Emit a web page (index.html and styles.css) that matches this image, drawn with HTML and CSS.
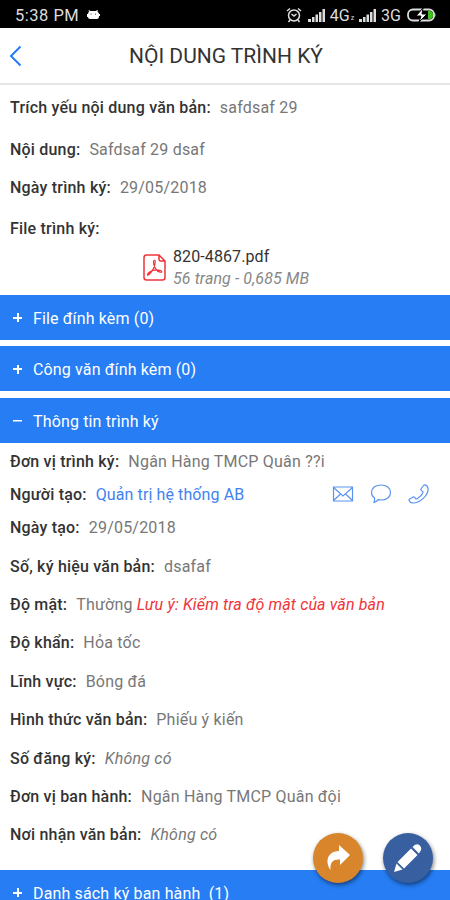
FILE: index.html
```html
<!DOCTYPE html>
<html lang="vi">
<head>
    <meta charset="UTF-8">
    <meta name="viewport" content="width=device-width, initial-scale=1.0">
    <title>Nội dung trình ký</title>
    <link rel="stylesheet" href="styles.css">
</head>
<body>
    <div class="screen">
        <div class="status-bar">
            <span class="clock">5:38 PM</span>
            <svg class="robot" width="15" height="12" viewBox="0 0 15 12"><path d="M3 3 2.500 1 4.500 2h5L12 1l-.5 2q1.500.5 1.500 2h1v2h-1q0 3-2 3H4q-2 0-2-2H1V5h1q0-1.500 1-2z" fill="#fff"/><circle cx="5" cy="5" r=".5"/><circle cx="9.500" cy="5" r=".5"/></svg>
            <div class="status-right">
                <svg width="16" height="16" viewBox="0 0 16 16" fill="none" stroke="#ddd" stroke-width="1.500"><circle cx="8" cy="8.500" r="5.500"/><path d="M5.500 7 8 9l2.500-2M1 4l3-2.500M15 4l-3-2.500M4 13l-1.500 2M12 13l1.500 2"/></svg>
                <svg class="signal" width="18" height="13" viewBox="0 0 18 13" fill="#ddd"><path d="M0 10h3v3H0zM4 8h2.500v5H4zM7.500 5.500H10V13H7.500zM11 3h2.500v10H11zM14.500 0H17v13h-2.500z"/></svg>
                <span class="net">4G</span><span class="net-small">z</span>
                <svg class="signal" width="18" height="13" viewBox="0 0 18 13" fill="#ddd"><path d="M0 10h3v3H0zM4 8h2.500v5H4zM7.500 5.500H10V13H7.500zM11 3h2.500v10H11zM14.500 0H17v13h-2.500z"/></svg>
                <span class="net">3G</span>
                <svg class="battery" width="30" height="14" viewBox="0 0 30 14"><rect x="1" y="1.500" width="26" height="11" rx="5" fill="none" stroke="#ddd" stroke-width="1.800"/><path d="M21 3h2q3 0 3 4t-3 4h-2z" fill="#3fc221"/><path d="M27.500 4.500q2 2.500 0 5z" fill="#ddd"/><path d="m16 0-7 8h5l-2 6 8-8h-5z" fill="#fff" stroke="#000" stroke-width="1"/></svg>
            </div>
        </div>

        <div class="header">
            <svg class="back" width="14" height="22" viewBox="0 0 14 22"><path d="M11.500 1.500 2 11l9.500 9.500" fill="none" stroke="#267df4" stroke-width="2"/></svg>
            <h1>NỘI DUNG TRÌNH KÝ</h1>
        </div>

        <div class="summary">
            <div class="row row-first"><b>Trích yếu nội dung văn bản:</b><span>safdsaf 29</span></div>
            <div class="row"><b>Nội dung:</b><span>Safdsaf 29 dsaf</span></div>
            <div class="row"><b>Ngày trình ký:</b><span>29/05/2018</span></div>
            <div class="row row-file"><b>File trình ký:</b></div>
            <div class="file">
                <svg width="24" height="27" viewBox="0 0 24 27" fill="none" stroke="#f0343a" stroke-width="1.500"><path d="M3.500 1H16l6 6v16.500Q22 26 19.500 26h-16Q1 26 1 23.500v-20Q1 1 3.500 1zM16 1v4q0 2 2 2h4"/><path d="M4.500 20.500c1.500-3.500 8-5.500 13-4 2 .8 1.500 2-.3 1.700-4-.7-6.700-6.200-6.700-10.200 0-2.200 2-2.200 1.800 0C12 12.500 9 18 6 20.500c-1 .8-2 .8-1.500 0z" stroke-width="1.200"/></svg>
                <div>
                    <div class="file-name">820-4867.pdf</div>
                    <div class="file-info">56 trang - 0,685 MB</div>
                </div>
            </div>
        </div>

        <div class="bar"><i class="sign plus"></i><span>File đính kèm (0)</span></div>
        <div class="bar"><i class="sign plus"></i><span>Công văn đính kèm (0)</span></div>
        <div class="bar bar-open"><i class="sign"></i><span>Thông tin trình ký</span></div>

        <div class="details">
            <div class="row row-unit"><b>Đơn vị trình ký:</b><span>Ngân Hàng TMCP Quân ??i</span></div>
            <div class="row row-creator">
                <b>Người tạo:</b><span class="link">Quản trị hệ thống AB</span>
                <div class="contact">
                    <svg width="22" height="18" viewBox="0 0 22 18"><path d="M1.500 2h19v14h-19zM1.500 2.500 11 11l9.500-8.500M1.500 15.500l7-6.500M20.500 15.500l-7-6.500"/></svg>
                    <svg width="22" height="20" viewBox="0 0 22 20"><path d="M11 1c5.500 0 9.500 3 9.500 7.500S16.500 16 11 16q-1.500 0-3-.4-1.500 2.400-4 2.900 1-2 .5-4.500-3-2-3-5.500C1.500 4 5.500 1 11 1z"/></svg>
                    <svg width="22" height="20" viewBox="0 0 22 20"><path d="M16 1q3-.5 4 3c1 7-8 15-15 15q-4-.5-4-3.500l4-2.500q1.500-.5 2.500 1.500 1 .8 2 0c2.500-1.500 4.500-3.500 5.500-6q.3-1-1-1.500-1.500-1-1-2z"/></svg>
                </div>
            </div>
            <div class="row"><b>Ngày tạo:</b><span>29/05/2018</span></div>
            <div class="row"><b>Số, ký hiệu văn bản:</b><span>dsafaf</span></div>
            <div class="row"><b>Độ mật:</b><span>Thường</span><em class="note">Lưu ý: Kiểm tra độ mật của văn bản</em></div>
            <div class="row"><b>Độ khẩn:</b><span>Hỏa tốc</span></div>
            <div class="row"><b>Lĩnh vực:</b><span>Bóng đá</span></div>
            <div class="row"><b>Hình thức văn bản:</b><span>Phiếu ý kiến</span></div>
            <div class="row"><b>Số đăng ký:</b><em>Không có</em></div>
            <div class="row"><b>Đơn vị ban hành:</b><span>Ngân Hàng TMCP Quân đội</span></div>
            <div class="row"><b>Nơi nhận văn bản:</b><em>Không có</em></div>
        </div>

        <div class="bar"><i class="sign plus"></i><span>Danh sách ký ban hành&nbsp; (1)</span></div>

        <div class="actions">
            <div class="fab fab-forward"><svg width="26" height="28" viewBox="0 0 26 28"><path d="M14 1 25 11 15 21v-5.500C8 15 5 18 5.500 26 1 20 0 8 14 7z" fill="#fff"/></svg></div>
            <div class="fab fab-edit"><svg width="30" height="30" viewBox="0 0 30 30" fill="#fff"><path d="m18 5.500 6.500 6.500L11 25.500 4.500 19zM19.500 4 22 1.800q2.500-1.600 4.800.7t1 5L26 10.500zM3.500 20.500l6 6L1 29z"/></svg></div>
        </div>
    </div>
</body>
</html>
```

FILE: styles.css
```css
* {
    box-sizing: border-box;
}

body {
    margin: 0;
    background: #fff;
    font-family: Roboto, sans-serif;
    font-size: 16px;
    color: #777;
}

.screen {
    position: relative;
    width: 450px;
    height: 900px;
    overflow: hidden;
}

.status-bar {
    display: flex;
    align-items: center;
    height: 28px;
    padding: 2px 13px 0 15px;
    background: #000;
    color: #ddd;
}

.clock {
    width: 65px;
    font-size: 16.5px;
    letter-spacing: 0.5px;
    white-space: nowrap;
}

.robot {
    margin-left: 6px;
}

.status-right {
    display: flex;
    align-items: center;
    margin-left: auto;
}

.status-right > svg:first-child {
    margin-right: 1px;
}

.signal {
    margin: 0 4px 0 5px;
}

.net {
    font-size: 16px;
}

.net-small {
    font-size: 7px;
    margin: 5px 0 0 1px;
}

.battery {
    margin-left: 6px;
}

.header {
    display: flex;
    align-items: center;
    height: 57px;
    padding-left: 9px;
    border-bottom: 2px solid #e6e6e6;
}

h1 {
    flex: 1;
    margin: 0 23px 0 0;
    padding-left: 2px;
    font-size: 21px;
    font-weight: 400;
    text-align: center;
    color: #333;
}

.row {
    display: flex;
    align-items: center;
    height: 38.4px;
    padding-left: 10px;
    white-space: nowrap;
}

.row b {
    margin-right: 9px;
    font-weight: 500;
    letter-spacing: 0.2px;
    color: #333;
}

.row span,
.row em {
    letter-spacing: 0.2px;
}

.row-first {
    height: 45px;
}

.row-file {
    height: 43px;
}

.file {
    display: flex;
    align-items: center;
    gap: 6px;
    height: 44px;
    margin: -4px 0 5px;
    padding-left: 143px;
    line-height: 22px;
}

.file-name {
    color: #333;
    letter-spacing: 0.1px;
}

.file-info {
    font-style: italic;
    letter-spacing: 0.1px;
    color: #888;
}

.bar {
    display: flex;
    align-items: center;
    height: 45px;
    margin-bottom: 6.4px;
    padding: 1px 0 0 13px;
    background: #267df4;
    color: #fff;
}

.bar-open {
    margin-bottom: 0;
}

.bar span {
    margin-left: 11px;
    padding-top: 1px;
    letter-spacing: 0.15px;
}

.sign {
    width: 9px;
    height: 9px;
    background: linear-gradient(#fff, #fff) center / 9px 1.5px no-repeat;
}

.plus {
    background: linear-gradient(#fff, #fff) center / 9px 2px no-repeat,
        linear-gradient(#fff, #fff) center / 2px 9px no-repeat;
}

.details {
    height: 427px;
}

.row-unit {
    height: 37px;
}

.row-creator {
    height: 29px;
}

.row .link {
    letter-spacing: 0.1px;
    color: #3f82f0;
}

.contact {
    display: flex;
    align-items: center;
    gap: 16px;
    margin: 0 20px 0 auto;
    fill: none;
    stroke: #5b93f0;
    stroke-width: 1.2;
}

.row .note {
    margin-left: 4px;
    letter-spacing: 0.15px;
    color: #f0343a;
}

.actions {
    position: absolute;
    right: 17px;
    bottom: 17px;
    display: flex;
    gap: 20px;
}

.fab {
    display: flex;
    align-items: center;
    justify-content: center;
    width: 50px;
    height: 50px;
    border-radius: 50%;
    box-shadow: 1px 2px 4px rgba(0, 0, 0, 0.5);
}

.fab-forward {
    background: #d8852b;
}

.fab-edit {
    background: #385f9f;
}
```
